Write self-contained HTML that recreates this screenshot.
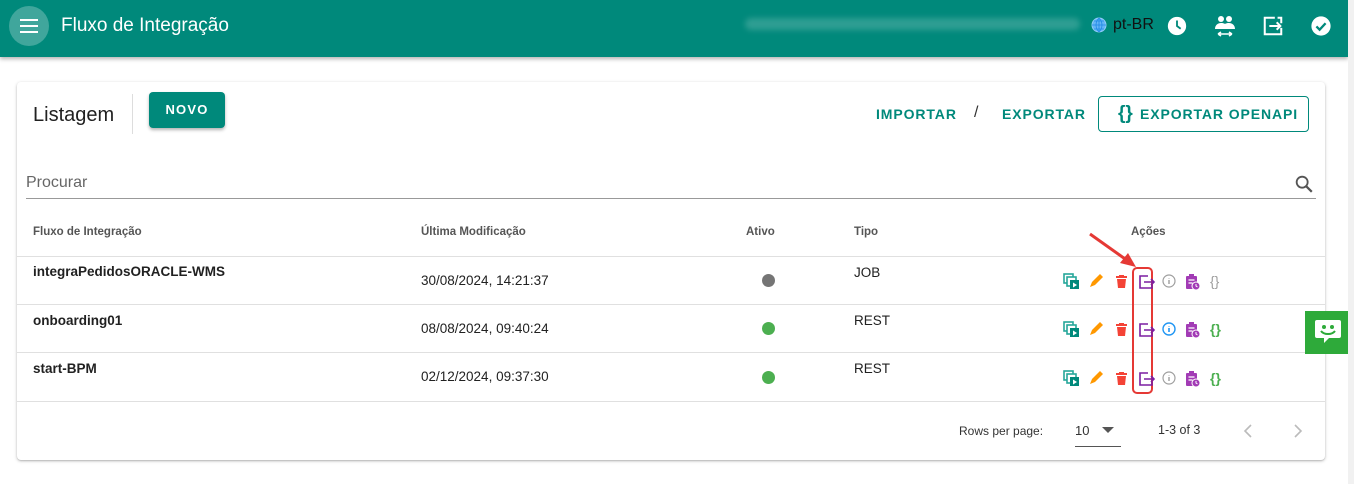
<!DOCTYPE html>
<html><head><meta charset="utf-8"><style>
*{box-sizing:border-box;margin:0;padding:0}
body{width:1354px;height:484px;overflow:hidden;background:#fff;font-family:"Liberation Sans",Roboto,sans-serif;position:relative;color:#212121}
.hdr{position:absolute;left:0;top:0;width:1348px;height:57px;background:#00897b;box-shadow:0 2px 4px rgba(0,0,0,.3)}
.menu{position:absolute;left:9px;top:6px;width:40px;height:40px;border-radius:50%;background:rgba(255,255,255,.25)}
.menu i{position:absolute;left:11px;width:18px;height:2px;background:#fff}
.title{position:absolute;left:61px;top:15px;color:#fff;font-size:19px}
.blur{position:absolute;left:745px;top:18px;width:335px;height:12px;background:rgba(255,255,255,.18);filter:blur(3px);border-radius:6px}
.card{position:absolute;left:17px;top:82px;width:1308px;height:378px;background:#fff;border-radius:4px;box-shadow:0 1px 3px rgba(0,0,0,.25),0 1px 1px rgba(0,0,0,.1)}
.abs{position:absolute}
.btn{font-weight:bold;letter-spacing:.9px;font-size:14px;color:#00897b}
.th{font-size:11.5px;color:#555;font-weight:bold;top:144px}
.name{font-size:13.5px;font-weight:bold}
.cell{font-size:13.5px}
.line{position:absolute;left:0;width:1308px;height:1px;background:#e0e0e0}
.dot{position:absolute;width:13px;height:13px;border-radius:50%}
</style></head><body>
<div class="hdr">
 <div class="menu"><i style="top:13px"></i><i style="top:19px"></i><i style="top:25px"></i></div>
 <div class="title">Fluxo de Integração</div>
 <div class="blur"></div>
 <svg class="abs" style="left:1091px;top:17px" width="16" height="16" viewBox="0 0 16 16"><circle cx="8" cy="8" r="7" fill="#64b5f6" stroke="#90caf9"/><path d="M1 8h14M8 1v14M3 4h10M3 12h10M8 1c-4 4-4 10 0 14M8 1c4 4 4 10 0 14" stroke="#1e88e5" fill="none" stroke-width=".8"/></svg>
 <div class="abs" style="left:1113px;top:16px;font-size:16px;color:#111">pt-BR</div>
 <svg class="abs" style="left:1166px;top:15px" width="22" height="22" viewBox="0 0 24 24"><circle cx="12" cy="12" r="10" fill="#fff"/><path d="M12 6v6l4 3" stroke="#00897b" stroke-width="2" fill="none"/></svg>
 <svg class="abs" style="left:1213px;top:14px" width="24" height="24" viewBox="0 0 24 24" fill="#fff"><circle cx="8" cy="5" r="3"/><circle cx="16" cy="5" r="3"/><path d="M2 15c0-4 3-6 6-6s4 1 4 1 1-1 4-1 6 2 6 6z"/><path d="M5 20h14M5 20l3-2M5 20l3 2M19 20l-3-2M19 20l-3 2" stroke="#fff" stroke-width="1.6"/></svg>
 <svg class="abs" style="left:1262px;top:15px" width="22" height="22" viewBox="0 0 24 24" fill="none" stroke="#fff" stroke-width="2.2"><path d="M14 3H3v18h18v-7M21 9V3h-4"/><path d="M8 12h12M16 8l4 4-4 4"/></svg>
 <svg class="abs" style="left:1310px;top:15px" width="22" height="22" viewBox="0 0 24 24"><circle cx="12" cy="12" r="10.5" fill="#fff"/><path d="M7 12.5l3.5 3.5L17 9" stroke="#00897b" stroke-width="2.5" fill="none"/></svg>
</div>
<div class="card">
 <div class="abs" style="left:16px;top:22px;font-size:20px">Listagem</div>
 <div class="abs" style="left:115px;top:12px;width:1px;height:40px;background:#ddd"></div>
 <div class="abs" style="left:132px;top:10px;width:76px;height:36px;background:#00897b;border-radius:4px;box-shadow:0 2px 3px rgba(0,0,0,.3);color:#fff;font-weight:bold;font-size:13px;letter-spacing:1.2px;text-align:center;line-height:36px">NOVO</div>
 <div class="abs btn" style="left:859px;top:24px">IMPORTAR</div>
 <div class="abs" style="left:957px;top:22px;font-size:16px;color:#333">/</div>
 <div class="abs btn" style="left:985px;top:24px">EXPORTAR</div>
 <div class="abs" style="left:1081px;top:14px;width:211px;height:36px;border:1px solid #00897b;border-radius:4px"></div>
 <div class="abs btn" style="left:1101px;top:21px;font-size:19px;letter-spacing:0">{}</div>
 <div class="abs btn" style="left:1123px;top:24px">EXPORTAR OPENAPI</div>
 <div class="abs" style="left:9px;top:92px;font-size:16px;color:#666">Procurar</div>
 <svg class="abs" style="left:1276px;top:91px" width="22" height="22" viewBox="0 0 24 24"><circle cx="10" cy="10" r="6" stroke="#555" stroke-width="2" fill="none"/><path d="M14.5 14.5l6 6" stroke="#555" stroke-width="2.4"/></svg>
 <div class="abs" style="left:9px;top:116px;width:1290px;height:1px;background:#999"></div>
 <div class="abs th" style="left:16px">Fluxo de Integração</div>
 <div class="abs th" style="left:404px">Última Modificação</div>
 <div class="abs th" style="left:729px">Ativo</div>
 <div class="abs th" style="left:837px">Tipo</div>
 <div class="abs th" style="left:1114px">Ações</div>
 <div class="line" style="top:174px"></div>
 <div class="line" style="top:222px"></div>
 <div class="line" style="top:270px"></div>
 <div class="line" style="top:319px"></div>

 <div class="abs name" style="left:16px;top:182px">integraPedidosORACLE-WMS</div>
 <div class="abs cell" style="left:404px;top:191px">30/08/2024, 14:21:37</div>
 <div class="dot" style="left:745px;top:192px;background:#757575"></div>
 <div class="abs cell" style="left:837px;top:183px">JOB</div>

 <div class="abs name" style="left:16px;top:231px">onboarding01</div>
 <div class="abs cell" style="left:404px;top:239px">08/08/2024, 09:40:24</div>
 <div class="dot" style="left:745px;top:240px;background:#4caf50"></div>
 <div class="abs cell" style="left:837px;top:231px">REST</div>

 <div class="abs name" style="left:16px;top:279px">start-BPM</div>
 <div class="abs cell" style="left:404px;top:287px">02/12/2024, 09:37:30</div>
 <div class="dot" style="left:745px;top:289px;background:#4caf50"></div>
 <div class="abs cell" style="left:837px;top:279px">REST</div>

 <div class="abs" style="left:942px;top:342px;font-size:12px;color:#333">Rows per page:</div>
 <div class="abs" style="left:1058px;top:341px;font-size:13px;color:#333">10</div>
 <svg class="abs" style="left:1085px;top:345px" width="12" height="6"><path d="M0 0h12L6 6z" fill="#555"/></svg>
 <div class="abs" style="left:1058px;top:364px;width:46px;height:1px;background:#555"></div>
 <div class="abs" style="left:1141px;top:341px;font-size:12.5px;color:#333">1-3 of 3</div>
 <svg class="abs" style="left:1226px;top:342px" width="10" height="14"><path d="M8 1L2 7l6 6" stroke="#bbb" stroke-width="1.6" fill="none"/></svg>
 <svg class="abs" style="left:1276px;top:342px" width="10" height="14"><path d="M2 1l6 6-6 6" stroke="#bbb" stroke-width="1.6" fill="none"/></svg>
</div>

<svg class="abs" style="left:1060px;top:230px" width="180" height="165" viewBox="0 0 180 165">
<defs>
<g id="cp"><rect x="0" y="0" width="9" height="9" fill="none" stroke="#26a69a" stroke-width="1.6"/><rect x="3" y="3" width="9" height="9" fill="#fff" stroke="#26a69a" stroke-width="1.6"/><rect x="6" y="6" width="9" height="9" fill="#00897b"/><path d="M9 8.5v5l4-2.5z" fill="#fff"/></g>
<g id="pen"><path d="M1 13l2-5 8-8 3 3-8 8z" fill="#ff9800"/></g>
<g id="tr"><path d="M1 3h11M4 2h5" stroke="#f44336" stroke-width="2"/><path d="M2 5h9l-1 9H3z" fill="#f44336"/></g>
<g id="ex"><path d="M9 2H1v12h12v-3" stroke="#7b1fa2" stroke-width="1.6" fill="none"/><path d="M5 8h10M12 5l3 3-3 3" stroke="#7b1fa2" stroke-width="1.6" fill="none"/></g>
<g id="cl"><rect x="1" y="2" width="11" height="13" rx="1" fill="#a23bb5"/><rect x="4" y="0" width="5" height="3" fill="#a23bb5"/><circle cx="11" cy="12" r="4.5" fill="#fff"/><circle cx="11" cy="12" r="3.5" fill="#a23bb5"/><path d="M11 10v2l1.5 1" stroke="#fff" stroke-width="1" fill="none"/><path d="M3.5 6h6M3.5 9h4" stroke="#fff" stroke-width="1.2"/></g>
</defs>
<path d="M30 4l38 27" stroke="#e53935" stroke-width="3"/><path d="M76 37l-16-4 8-10z" fill="#e53935"/>
<rect x="73" y="38" width="19" height="125" rx="4" fill="none" stroke="#e53935" stroke-width="2"/>
<g transform="translate(4,44)"><use href="#cp"/><use href="#pen" x="25"/><use href="#tr" x="51"/><use href="#ex" x="75"/><circle cx="105" cy="7" r="6" fill="none" stroke="#9e9e9e" stroke-width="1.2"/><path d="M105 6v4M105 4v.5" stroke="#9e9e9e" stroke-width="1.4"/><use href="#cl" x="121"/><text x="146" y="12" font-size="14" fill="#9e9e9e" font-family="Liberation Sans">{}</text></g>
<g transform="translate(4,92)"><use href="#cp"/><use href="#pen" x="25"/><use href="#tr" x="51"/><use href="#ex" x="75"/><circle cx="105" cy="7" r="6" fill="none" stroke="#2196f3" stroke-width="1.4"/><path d="M105 6v4M105 4v.5" stroke="#2196f3" stroke-width="1.6"/><use href="#cl" x="121"/><text x="146" y="12" font-size="14" fill="#4caf50" font-weight="bold" font-family="Liberation Sans">{}</text></g>
<g transform="translate(4,141)"><use href="#cp"/><use href="#pen" x="25"/><use href="#tr" x="51"/><use href="#ex" x="75"/><circle cx="105" cy="7" r="6" fill="none" stroke="#9e9e9e" stroke-width="1.2"/><path d="M105 6v4M105 4v.5" stroke="#9e9e9e" stroke-width="1.4"/><use href="#cl" x="121"/><text x="146" y="12" font-size="14" fill="#4caf50" font-weight="bold" font-family="Liberation Sans">{}</text></g>
</svg>

<div class="abs" style="left:1305px;top:311px;width:45px;height:43px;background:#2eaa3a"></div>
<svg class="abs" style="left:1314px;top:319px" width="28" height="26" viewBox="0 0 28 26"><path d="M3 1h22a2 2 0 0 1 2 2v14a2 2 0 0 1-2 2H15l-5 5v-5H3a2 2 0 0 1-2-2V3a2 2 0 0 1 2-2z" fill="#fff"/><circle cx="10" cy="8" r="2" fill="#2eaa3a"/><circle cx="18" cy="8" r="2" fill="#2eaa3a"/><path d="M7 12c3 4 11 4 14 0" stroke="#2eaa3a" stroke-width="2" fill="none"/></svg>
<div class="abs" style="left:1348px;top:0;width:6px;height:484px;background:#f1f1f1"></div>
</body></html>
